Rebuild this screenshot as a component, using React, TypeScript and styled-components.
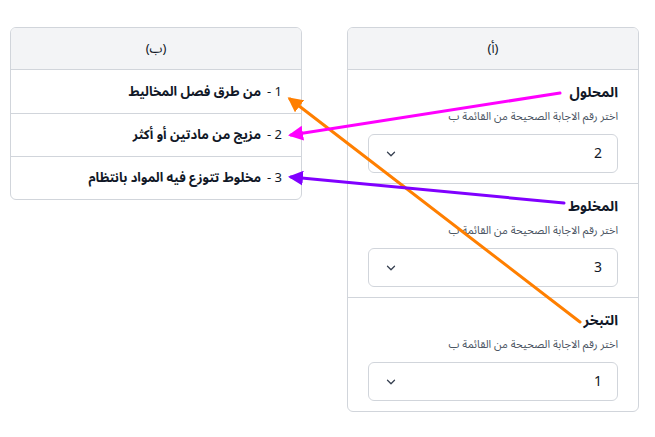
import React from "react";
import styled, { createGlobalStyle } from "styled-components";

const Global = createGlobalStyle`
  html, body { margin: 0; padding: 0; background: #ffffff; }
  body { font-family: "Noto Sans Arabic", "DejaVu Sans", "Noto Sans", sans-serif; color: #111827; }
  * { box-sizing: border-box; }
`;

const Page = styled.div`
  position: relative;
  width: 655px;
  height: 437px;
  direction: rtl;
  padding: 27px 16px 0 10px;
  display: flex;
  align-items: flex-start;
  gap: 45px;
`;

const Card = styled.div`
  width: 292px;
  border: 1px solid #d1d5db;
  border-radius: 6px;
  overflow: hidden;
  background: #fff;
`;

const CardHeader = styled.div`
  height: 42px;
  background: #f3f4f6;
  border-bottom: 1px solid #d1d5db;
  display: flex;
  align-items: center;
  justify-content: center;
  font-size: 13px;
  color: #111827;
`;

const Section = styled.div`
  padding: 12px 20px 10px;
  & + & { border-top: 1px solid #d1d5db; }
`;

const Title = styled.div`
  font-weight: 700;
  font-size: 14px;
  line-height: 22px;
`;

const Helper = styled.div`
  margin-top: 4px;
  font-size: 11px;
  line-height: 18px;
  color: #4b5563;
`;

const Select = styled.div`
  margin-top: 8px;
  height: 39px;
  border: 1px solid #d1d5db;
  border-radius: 6px;
  display: flex;
  align-items: center;
  justify-content: space-between;
  padding: 0 15px 0 15px;
  font-size: 14px;
  color: #111827;
`;

const Row = styled.div`
  height: 43px;
  display: flex;
  align-items: center;
  padding: 0 19px;
  font-size: 13px;
  & + & { border-top: 1px solid #d1d5db; }
`;

const Num = styled.span`
  font-weight: 400;
  margin-left: 6px;
`;

const Label = styled.span`
  font-weight: 700;
`;

const Overlay = styled.svg`
  position: absolute;
  left: 0;
  top: 0;
  pointer-events: none;
`;

const Chevron = () => (
  <svg width="14" height="14" viewBox="0 0 24 24" fill="none" stroke="#374151" strokeWidth="2.2" strokeLinecap="round" strokeLinejoin="round">
    <path d="M6 9l6 6 6-6" />
  </svg>
);

const itemsA = [
  { title: "المحلول", value: "2" },
  { title: "المخلوط", value: "3" },
  { title: "التبخر", value: "1" },
];

const itemsB = ["من طرق فصل المخاليط", "مزيج من مادتين أو أكثر", "مخلوط تتوزع فيه المواد بانتظام"];

const arrows = [
  { color: "#ff7f00", x1: 580, y1: 322, x2: 290, y2: 99 },
  { color: "#ff00ff", x1: 560, y1: 93, x2: 291, y2: 135 },
  { color: "#8000ff", x1: 564, y1: 203, x2: 291, y2: 177 },
];

export default function App() {
  return (
    <>
      <Global />
      <Page>
        <Card>
          <CardHeader>(أ)</CardHeader>
          {itemsA.map((it) => (
            <Section key={it.title}>
              <Title>{it.title}</Title>
              <Helper>اختر رقم الاجابة الصحيحة من القائمة ب</Helper>
              <Select>
                <span>{it.value}</span>
                <Chevron />
              </Select>
            </Section>
          ))}
        </Card>
        <Card>
          <CardHeader>(ب)</CardHeader>
          {itemsB.map((t, i) => (
            <Row key={t}>
              <Num>{i + 1} -</Num>
              <Label>{t}</Label>
            </Row>
          ))}
        </Card>
        <Overlay width="655" height="437" viewBox="0 0 655 437">
          <defs>
            {arrows.map((a, i) => (
              <marker key={i} id={`ah${i}`} markerWidth="5" markerHeight="5" refX="4" refY="2.5" orient="auto" markerUnits="strokeWidth">
                <path d="M0,0 L5,2.5 L0,5 z" fill={a.color} />
              </marker>
            ))}
          </defs>
          {arrows.map((a, i) => (
            <line key={i} x1={a.x1} y1={a.y1} x2={a.x2} y2={a.y2} stroke={a.color} strokeWidth="3" strokeLinecap="round" markerEnd={`url(#ah${i})`} />
          ))}
        </Overlay>
      </Page>
    </>
  );
}
